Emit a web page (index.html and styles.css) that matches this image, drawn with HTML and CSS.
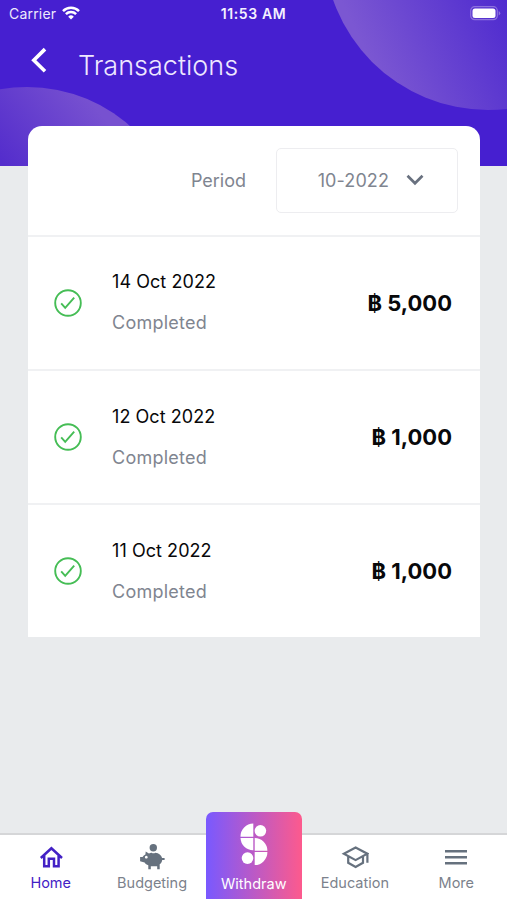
FILE: index.html
```html
<!DOCTYPE html>
<html lang="en">
<head>
<meta charset="utf-8">
<title>Transactions</title>
<link rel="stylesheet" href="styles.css">
</head>
<body>
<div class="app">
  <header class="hero">
    <svg class="hero-art" width="507" height="166" viewBox="0 0 507 166" aria-hidden="true">
      <defs>
        <linearGradient id="orbRight" gradientUnits="userSpaceOnUse" x1="375" y1="70" x2="507" y2="5">
          <stop offset="0" stop-color="#7b57d2"/><stop offset="1" stop-color="#4f2bcf"/>
        </linearGradient>
        <linearGradient id="orbLeft" gradientUnits="userSpaceOnUse" x1="90" y1="100" x2="5" y2="166">
          <stop offset="0" stop-color="#7751d0"/><stop offset="1" stop-color="#542dcc"/>
        </linearGradient>
      </defs>
      <circle cx="488" cy="-54" r="164" fill="url(#orbRight)"/>
      <circle cx="27" cy="243" r="156" fill="url(#orbLeft)"/>
    </svg>
    <div class="status">
      <div class="carrier"><span>Carrier</span>
        <svg width="18" height="14" viewBox="0 0 18 14" fill="none" stroke="#fff" stroke-width="2.5"><path d="M1 5.1a11.4 11.4 0 0 1 16 0M3.9 8.1a7.2 7.2 0 0 1 10.2 0"/><path d="M9 13.5 6.2 10.7a4 4 0 0 1 5.6 0Z" fill="#fff" stroke="none"/></svg>
      </div>
      <span class="clock">11:53 AM</span>
      <svg class="battery" width="31" height="15" viewBox="0 0 31 15"><rect x=".7" y=".7" width="26.6" height="13" rx="4" fill="none" stroke="#8d72de" stroke-width="1.2"/><rect x="2.5" y="2.5" width="23" height="9.4" rx="2.5" fill="#fff"/><path d="M28.7 5v4.4q1.6-.7 1.6-2.2T28.7 5Z" fill="#8d72de"/></svg>
    </div>
    <div class="title-row">
      <svg width="18" height="28" viewBox="0 0 18 28" fill="none" stroke="#fff" stroke-width="3.6"><path d="M16 3.1 4.8 14.2 16 25.3"/></svg>
      <h1>Transactions</h1>
    </div>
  </header>

  <main class="card">
    <div class="filter">
      <span class="period">Period</span>
      <div class="select"><span>10-2022</span>
        <svg width="18" height="12" viewBox="0 0 18 12" fill="none" stroke="#69717f" stroke-width="2.7"><path d="m1.5 1.7 7.5 7.6 7.5-7.6"/></svg>
      </div>
    </div>
    <section class="item">
      <svg class="check" viewBox="0 0 28 28"><circle cx="14" cy="14" r="12.8"/><path d="m7.2 14.4 4 4.4 9-10.2"/></svg>
      <div class="info"><span class="date">14 Oct 2022</span><span class="state">Completed</span></div>
      <strong class="amount">฿ 5,000</strong>
    </section>
    <section class="item">
      <svg class="check" viewBox="0 0 28 28"><circle cx="14" cy="14" r="12.8"/><path d="m7.2 14.4 4 4.4 9-10.2"/></svg>
      <div class="info"><span class="date">12 Oct 2022</span><span class="state">Completed</span></div>
      <strong class="amount">฿ 1,000</strong>
    </section>
    <section class="item">
      <svg class="check" viewBox="0 0 28 28"><circle cx="14" cy="14" r="12.8"/><path d="m7.2 14.4 4 4.4 9-10.2"/></svg>
      <div class="info"><span class="date">11 Oct 2022</span><span class="state">Completed</span></div>
      <strong class="amount">฿ 1,000</strong>
    </section>
  </main>

  <nav class="tabs">
    <a class="tab active">
      <svg width="28" height="26" viewBox="0 0 28 26" fill="none" stroke="currentColor" stroke-width="2.5"><path d="M3.8 14 14.4 4.3 25 14M7.2 11.6v10.6h4.6v-7.4h5.2v7.4h4.6V11.6"/></svg>
      <span>Home</span>
    </a>
    <a class="tab">
      <svg width="28" height="26" viewBox="0 0 28 26" fill="currentColor"><circle cx="15.3" cy="3.8" r="3.7"/><path fill-rule="evenodd" d="M7.7 7.6 10.9 9.6c1.2-.6 1.9-.8 2.7-.9 1.1.7 2.6.7 3.7 0 3.7.3 6 2.3 6.8 5.3l2.5-.1v2.1h-2.4c-.2 1.9-1.1 3.3-2.5 4.3v5h-2.5v-3.1h-6.4v3.1h-2.5v-4c-1.5-.6-2.9-1.5-3.7-2.8l-4.5-1.3V13h2.5c.7-1.1 1.6-1.8 2.8-2.4Zm.6 4.2a1.4 1.4 0 1 0 .01 0Z"/></svg>
      <span>Budgeting</span>
    </a>
    <a class="tab withdraw">
      <svg width="28" height="43" viewBox="0 0 28 43" fill="#fff"><path d="M13.3 .5V13.8H.5A13 13 0 0 1 13.3 .5ZM.5 15.1H13.3v12.2A12.6 12.6 0 0 1 .5 15.1ZM14.7 15.1a12.7 12.7 0 0 1 12.7 12.6H14.7ZM14.7 29h12.7a13 13 0 0 1-12.7 13.1Z"/><circle cx="20.4" cy="7.8" r="5.8"/><circle cx="7.5" cy="35.1" r="5.8"/></svg>
      <span>Withdraw</span>
    </a>
    <a class="tab">
      <svg width="28" height="26" viewBox="0 0 28 26" fill="none" stroke="currentColor" stroke-width="2.2"><path d="m2.9 9.7 11.7-6.2 11.7 6.2-11.7 6.4ZM7.2 12v6.8l7.4 4.2 7.4-4.2V12M26.4 9.5v9.3"/></svg>
      <span>Education</span>
    </a>
    <a class="tab">
      <svg width="28" height="26" viewBox="0 0 28 26" fill="none" stroke="currentColor" stroke-width="2.4"><path d="M3 7.3h22M3 13.3h22M3 19.3h22"/></svg>
      <span>More</span>
    </a>
  </nav>
</div>
</body>
</html>
```

FILE: styles.css
```css
* { box-sizing: border-box; }
body { margin: 0; font-family: Inter, "Liberation Sans", sans-serif; color: #08080a; }
svg { display: block; flex: none; }
.app { width: 507px; height: 900px; display: flex; flex-direction: column; background: #e9ebed; overflow: hidden; }

.hero { position: relative; height: 166px; flex: none; background: #461fd0; color: #fff; }
.hero-art { position: absolute; inset: 0; }
.status { position: relative; display: grid; grid-template-columns: 1fr auto 1fr; align-items: center; height: 26px; padding: 0 6px 0 9px; font-size: 14px; }
.carrier { display: flex; align-items: center; gap: 6px; color: #eee9fc; letter-spacing: .2px; }
.clock { font-weight: 600; color: #f4f0ff; letter-spacing: .6px; margin-right: 3px; }
.battery { justify-self: end; }
.title-row { position: relative; display: flex; align-items: flex-start; padding: 20px 0 0 29px; gap: 31px; }
h1 { margin: 4px 0 0; font-size: 27px; line-height: 32px; font-weight: 300; color: #eee8ff; }

.card { position: relative; width: 452px; margin: -40.4px 0 0 28px; background: #fff; border-radius: 14px 14px 0 0; }
.filter { display: flex; align-items: center; justify-content: flex-end; height: 109px; padding: 0 22px 0 0; color: #7f8590; font-size: 18px; }
.period { margin-right: 30px; }
.select { display: flex; align-items: center; justify-content: flex-end; gap: 17px; width: 182px; height: 65px; padding-right: 33px; border: 1px solid #ededf0; border-radius: 5px; letter-spacing: .1px; }
.item { display: flex; align-items: center; height: 134.3px; padding: 0 28px 0 26px; border-top: 2px solid #f0f1f3; }
.item:last-child { height: 133.8px; }
.check { width: 28px; height: 28px; fill: none; stroke: #45bd55; stroke-width: 1.9; }
.info { display: flex; flex-direction: column; gap: 17px; flex: 1; margin-left: 30px; font-size: 18px; line-height: 24px; }
.date { letter-spacing: .06px; }
.state { color: #7f8590; letter-spacing: .25px; }
.amount { font-size: 22px; font-weight: 700; }

.tabs { display: grid; grid-template-columns: repeat(5, 1fr); height: 67px; margin-top: auto; flex: none; background: #fff; border-top: 2px solid #d5d6d8; }
.tab { display: flex; flex-direction: column; align-items: center; padding-top: 9px; gap: 4px; color: #7c828c; font-size: 14.5px; line-height: 18px; }
.tab svg { color: #66717e; }
.tab.active, .tab.active svg { color: #4321c5; }
.tab.withdraw { width: 96px; height: 87px; margin: -23px 0 0 3px; padding-top: 11px; gap: 9px; border-radius: 7px 7px 0 0; color: #fff; background: linear-gradient(90deg, #7959ff, #fd5a8d); }
.tab.withdraw svg { color: #fff; }
```
